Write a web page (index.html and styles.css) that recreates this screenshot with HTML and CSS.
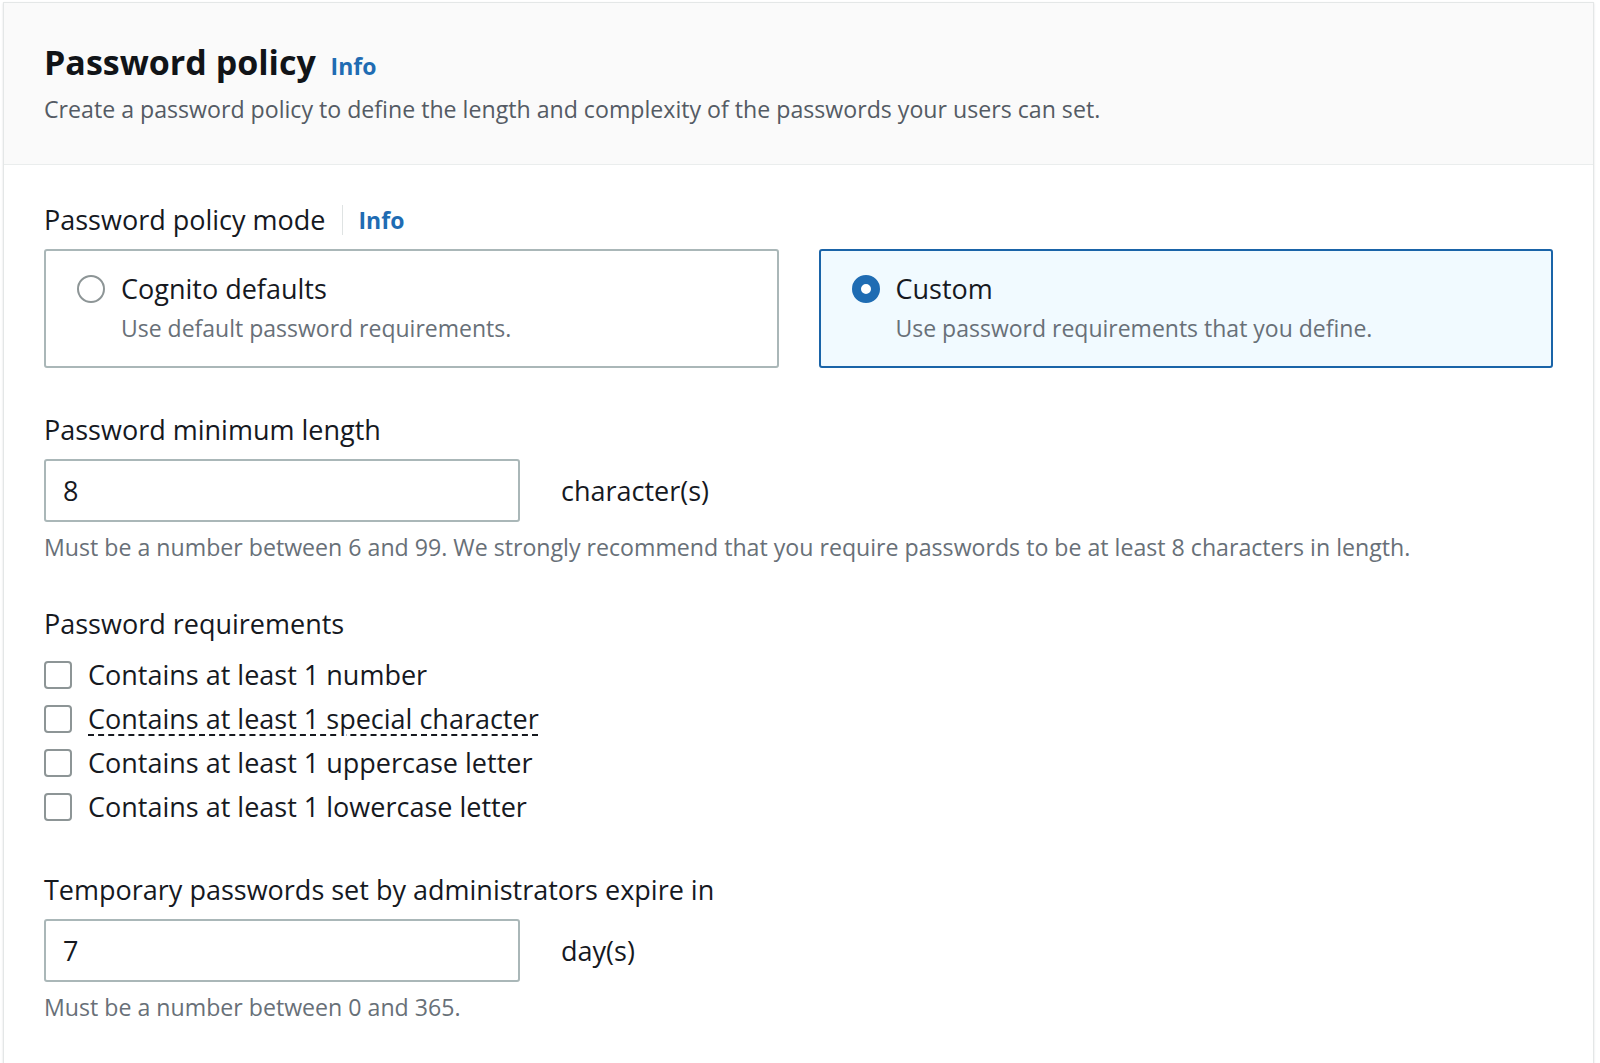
FILE: index.html
```html
<!DOCTYPE html>
<html lang="en">
<head>
    <meta charset="UTF-8">
    <meta name="viewport" content="width=device-width, initial-scale=1.0">
    <title>Password policy</title>
    <link rel="stylesheet" href="styles.css">
</head>
<body>
    <div class="panel">
        <div class="panel-header">
            <h2 class="panel-title">Password policy <a class="info-link" href="#">Info</a></h2>
            <p class="panel-desc">Create a password policy to define the length and complexity of the passwords your users can set.</p>
        </div>

        <div class="panel-body">
            <!-- Policy mode -->
            <div class="field field-mode">
                <div class="field-label">
                    Password policy mode
                    <span class="label-divider"></span>
                    <a class="info-link" href="#">Info</a>
                </div>
                <div class="tiles">
                    <label class="tile">
                        <input class="radio" type="radio" name="mode">
                        <span class="tile-text">
                            <span class="tile-title">Cognito defaults</span>
                            <span class="tile-desc">Use default password requirements.</span>
                        </span>
                    </label>
                    <label class="tile selected">
                        <input class="radio" type="radio" name="mode" checked>
                        <span class="tile-text">
                            <span class="tile-title">Custom</span>
                            <span class="tile-desc">Use password requirements that you define.</span>
                        </span>
                    </label>
                </div>
            </div>

            <!-- Minimum length -->
            <div class="field">
                <div class="field-label">Password minimum length</div>
                <div class="input-row">
                    <input class="text-input" type="text" value="8">
                    <span class="unit">character(s)</span>
                </div>
                <div class="hint">Must be a number between 6 and 99. We strongly recommend that you require passwords to be at least 8 characters in length.</div>
            </div>

            <!-- Requirements -->
            <div class="field">
                <div class="field-label">Password requirements</div>
                <div class="checks">
                    <label class="check-row"><input class="checkbox" type="checkbox"><span>Contains at least 1 number</span></label>
                    <label class="check-row"><input class="checkbox" type="checkbox"><span class="dashed">Contains at least 1 special character</span></label>
                    <label class="check-row"><input class="checkbox" type="checkbox"><span>Contains at least 1 uppercase letter</span></label>
                    <label class="check-row"><input class="checkbox" type="checkbox"><span>Contains at least 1 lowercase letter</span></label>
                </div>
            </div>

            <!-- Temporary passwords -->
            <div class="field">
                <div class="field-label">Temporary passwords set by administrators expire in</div>
                <div class="input-row">
                    <input class="text-input" type="text" value="7">
                    <span class="unit">day(s)</span>
                </div>
                <div class="hint">Must be a number between 0 and 365.</div>
            </div>
        </div>
    </div>
</body>
</html>
```

FILE: styles.css
```css
* {
    box-sizing: border-box;
}

body {
    margin: 0;
    font-family: "Open Sans", Arial, sans-serif;
    color: #16191f;
    background: #fff;
}

.panel {
    width: 1591px;
    margin: 2px 0 0 3px;
    border: 1px solid #e4e7e7;
    box-shadow: 0 1px 2px rgba(0, 28, 36, 0.12);
    background: #fff;
}

/* Header */
.panel-header {
    background: #fafafa;
    border-bottom: 1px solid #eaeded;
    padding: 38px 40px 39px;
}

.panel-title {
    margin: 0;
    font-size: 34px;
    line-height: 42px;
    font-weight: 700;
    color: #111418;
}

.info-link {
    font-size: 23px;
    font-weight: 700;
    color: #1f6cb3;
    text-decoration: none;
    margin-left: 6px;
}

.panel-desc {
    margin: 6px 0 0;
    font-size: 23.15px;
    line-height: 32px;
    color: #545b64;
}

/* Body */
.panel-body {
    padding: 35px 40px 80px;
}

.field + .field {
    margin-top: 41px;
}

.field-mode {
    margin-bottom: 42px;
}

.field-mode + .field {
    margin-top: 0;
}

.field-label {
    display: flex;
    align-items: center;
    font-size: 27px;
    line-height: 40px;
    margin-bottom: 9px;
}

.field-label .info-link {
    margin-left: 0;
}

.label-divider {
    width: 1px;
    height: 30px;
    background: #dfe3e3;
    margin: 0 16px;
}

/* Radio tiles */
.tiles {
    display: grid;
    grid-template-columns: 1fr 1fr;
    gap: 40px;
    margin-top: 9px;
}

.tile {
    display: flex;
    align-items: flex-start;
    gap: 16px;
    border: 2px solid #aab7b8;
    border-radius: 3px;
    padding: 18px 20px 22px 31px;
    cursor: pointer;
}

.tile.selected {
    border-color: #1a64a8;
    background: #f1faff;
}

.radio {
    appearance: none;
    margin: 6px 0 0;
    width: 28px;
    height: 28px;
    flex: none;
    border: 2px solid #8d9596;
    border-radius: 50%;
    background: #fff;
}

.radio:checked {
    border: 9px solid #1f6cb3;
}

.tile-text {
    display: flex;
    flex-direction: column;
}

.tile-title {
    font-size: 27px;
    line-height: 40px;
}

.tile-desc {
    margin-top: 3px;
    font-size: 23px;
    line-height: 32px;
    color: #687078;
}

/* Text inputs */
.input-row {
    display: flex;
    align-items: center;
    gap: 41px;
}

.text-input {
    width: 476px;
    height: 63px;
    border: 2px solid #aab7b8;
    border-radius: 3px;
    padding: 0 17px;
    font-family: inherit;
    font-size: 27px;
    color: #16191f;
    outline: none;
}

.unit {
    font-size: 27px;
    line-height: 40px;
}

.hint {
    margin-top: 9px;
    font-size: 23.15px;
    line-height: 32px;
    color: #687078;
}

/* Checkboxes */
.checks {
    display: flex;
    flex-direction: column;
}

.check-row {
    display: flex;
    align-items: center;
    gap: 16px;
    height: 44px;
    font-size: 27px;
    line-height: 40px;
    cursor: pointer;
}

.checkbox {
    appearance: none;
    margin: 0;
    width: 28px;
    height: 28px;
    flex: none;
    border: 2px solid #8d9596;
    border-radius: 4px;
    background: #fff;
}

.dashed {
    text-decoration: underline dashed #16191f;
    text-decoration-thickness: 1.5px;
    text-underline-offset: 5px;
}
```
